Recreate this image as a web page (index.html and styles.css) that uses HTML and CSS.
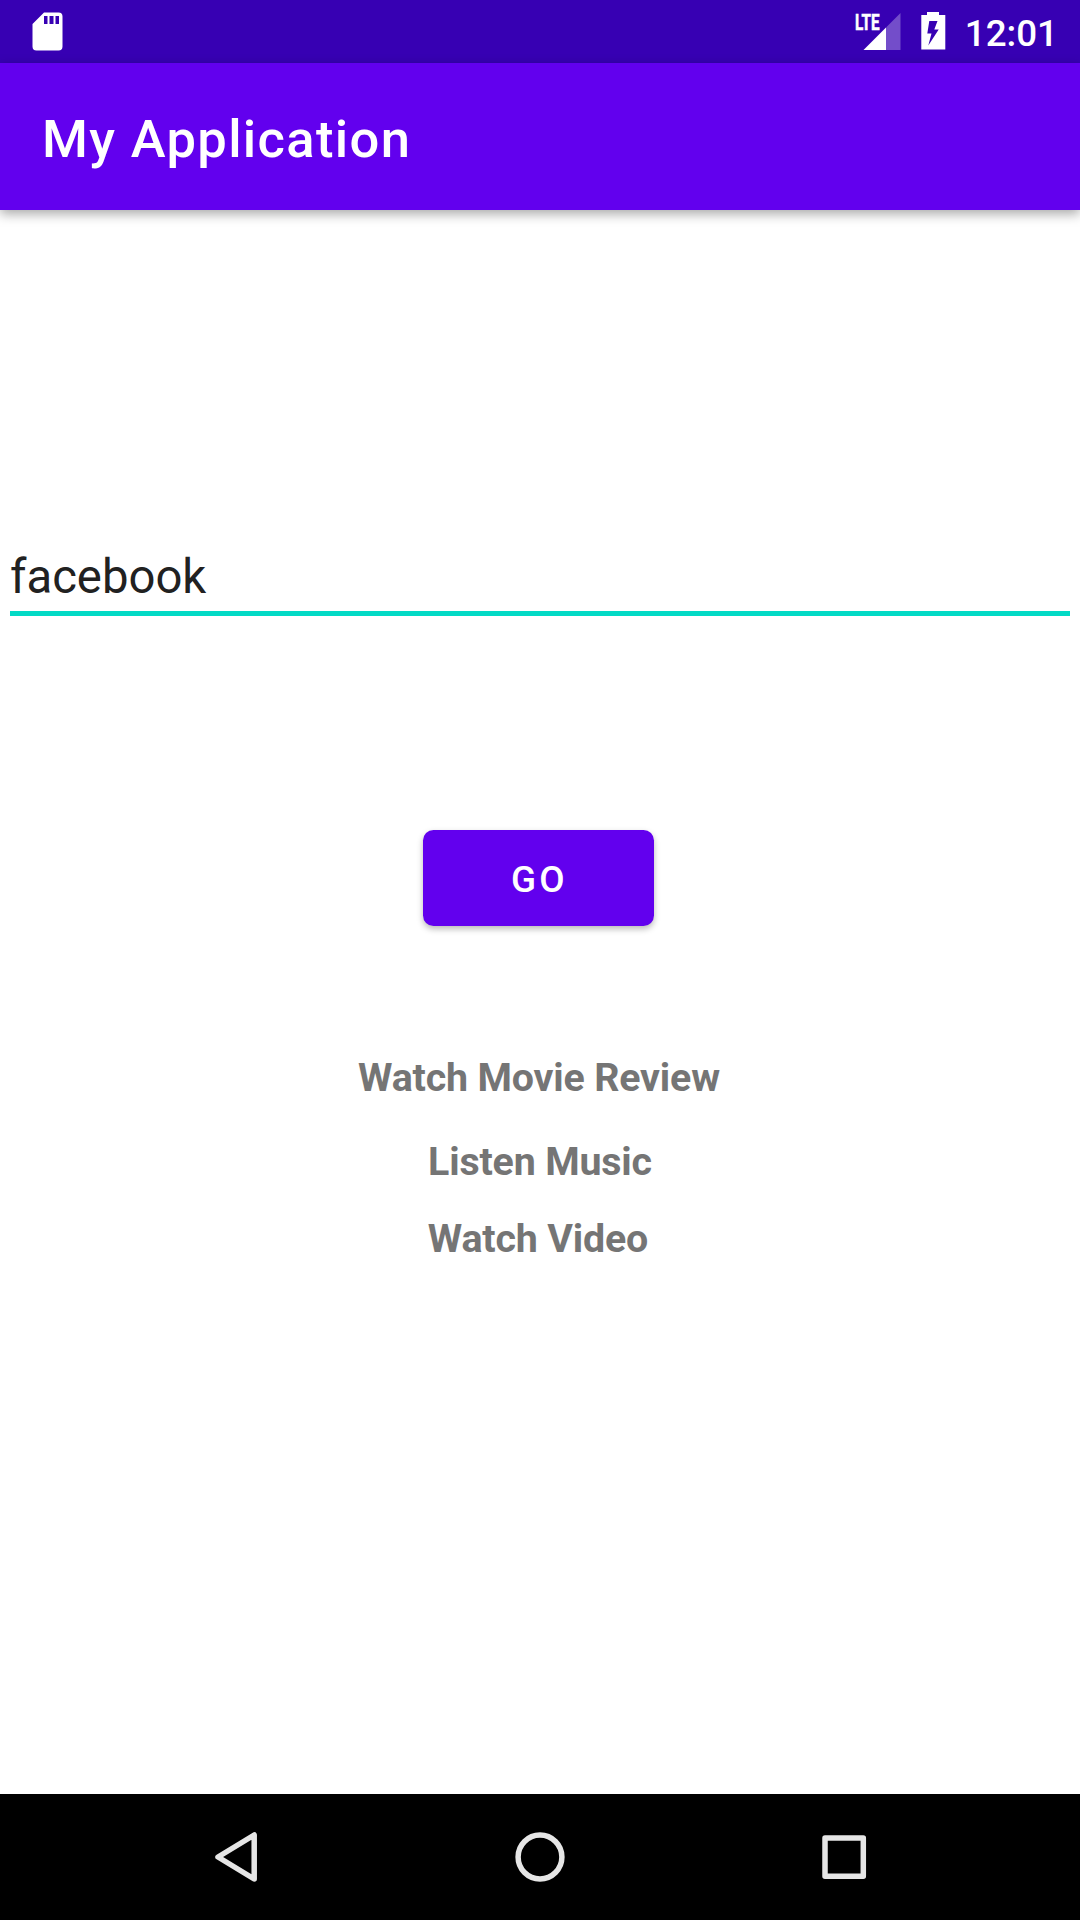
FILE: index.html
```html
<!DOCTYPE html>
<html lang="en">
<head>
<meta charset="utf-8">
<title>My Application</title>
<link rel="stylesheet" href="styles.css">
</head>
<body>
<div class="screen">
  <div class="status-bar">
    <svg class="sd-card" width="32" height="40" viewBox="0 0 32 40">
      <path fill="#fff" fill-rule="evenodd" d="M12 .5H26.500a4 4 0 0 1 4 4V34.500a4 4 0 0 1-4 4H4.500a4 4 0 0 1-4-4V12ZM12 4V12H15.500V4ZM17.500 4V12H21.500V4ZM23.500 4V12H27V4Z"/>
    </svg>
    <div class="status-icons">
      <svg class="signal" width="48" height="40" viewBox="0 0 48 40">
        <path fill="#fff" fill-opacity=".3" d="M31 14.500L45.500 0V37H31Z"/>
        <path fill="#fff" d="M31 14.500V37H8.500Z"/>
        <text class="lte" x="0" y="16.500" textLength="24.500" lengthAdjust="spacingAndGlyphs">LTE</text>
      </svg>
      <svg class="battery" width="25" height="38" viewBox="0 0 25 38">
        <path fill="#fff" fill-rule="evenodd" d="M6 0H18V3H24.300V37.500H.3V3H6ZM8.300 9L6.300 21.500H10.500L7.300 33.500L17.700 17.500H13.300L16.500 9Z"/>
      </svg>
      <span class="clock">12:01</span>
    </div>
  </div>
  <header class="app-bar"><h1 class="title">My Application</h1></header>
  <main class="content">
    <div class="field">facebook</div>
    <button class="go" type="button">GO</button>
    <nav class="links">
      <a class="link review">Watch Movie Review</a>
      <a class="link music">Listen Music</a>
      <a class="link video">Watch Video</a>
    </nav>
  </main>
  <footer class="nav-bar">
    <svg width="60" height="60" viewBox="0 0 60 60"><path d="M44.200 7V51L8 29Z"/></svg>
    <svg width="60" height="60" viewBox="0 0 60 60"><circle cx="30" cy="29" r="21.900"/></svg>
    <svg width="60" height="60" viewBox="0 0 60 60"><rect x="15" y="10" width="38.300" height="38.300"/></svg>
  </footer>
</div>
</body>
</html>
```
FILE: styles.css
```css
* { box-sizing: border-box; }
body { margin: 0; font-family: Roboto, sans-serif; }
.screen {
  display: flex;
  flex-direction: column;
  width: 1080px;
  height: 1920px;
  overflow: hidden;
  background: #fff;
}
.status-bar {
  display: flex;
  flex: none;
  justify-content: space-between;
  height: 63px;
  padding: 12px 22px 0 32px;
  background: #3700b3;
}
.status-icons { display: flex; align-items: flex-start; }
.signal { margin: 1px 18px 0 0; overflow: visible; }
.lte {
  font: 700 22.500px Roboto, sans-serif;
  fill: #fff;
  stroke: #fff;
  stroke-width: .6;
}
.battery { margin-right: 19px; }
.clock {
  color: #fff;
  font-size: 36.750px;
  font-weight: 500;
  line-height: 43px;
}
.app-bar {
  display: flex;
  flex: none;
  align-items: center;
  height: 147px;
  padding: 5px 42px 0;
  background: #6200ee;
  box-shadow: 0 4px 11px rgba(0, 0, 0, .34);
}
.title {
  margin: 0;
  color: #fff;
  font-size: 52.500px;
  font-weight: 500;
  letter-spacing: 1.350px;
  line-height: 62px;
}
.content {
  display: flex;
  flex: 1;
  flex-direction: column;
  align-items: center;
  padding: 336px 10px 0;
}
.field {
  width: 100%;
  height: 70px;
  padding-top: 1px;
  border-bottom: 5px solid #03dac5;
  color: #212121;
  font-size: 47.250px;
  line-height: 60px;
}
.go {
  width: 231px;
  height: 96px;
  margin: 214px 3px 0 0;
  padding: 4px 0 0 2px;
  border: 0;
  border-radius: 10.500px;
  background: #6200ee;
  box-shadow: 0 3px 6px rgba(0, 0, 0, .28);
  color: #fff;
  font: 500 36.750px/44px Roboto, sans-serif;
  letter-spacing: .0892857em;
}
.links {
  display: flex;
  flex-direction: column;
  align-items: center;
  margin-top: 129px;
}
.link {
  color: #757575;
  font-size: 39.375px;
  font-weight: 700;
  letter-spacing: -.180px;
  line-height: 46px;
}
.review { margin-right: 2px; }
.music { margin-top: 38px; }
.video { margin: 31px 4px 0 0; }
.nav-bar {
  display: flex;
  flex: none;
  justify-content: space-between;
  height: 126px;
  padding: 34px 210px 0;
  background: #000;
}
.nav-bar svg {
  fill: none;
  stroke: #e6e6e6;
  stroke-width: 5.500;
  stroke-linejoin: round;
}
```
